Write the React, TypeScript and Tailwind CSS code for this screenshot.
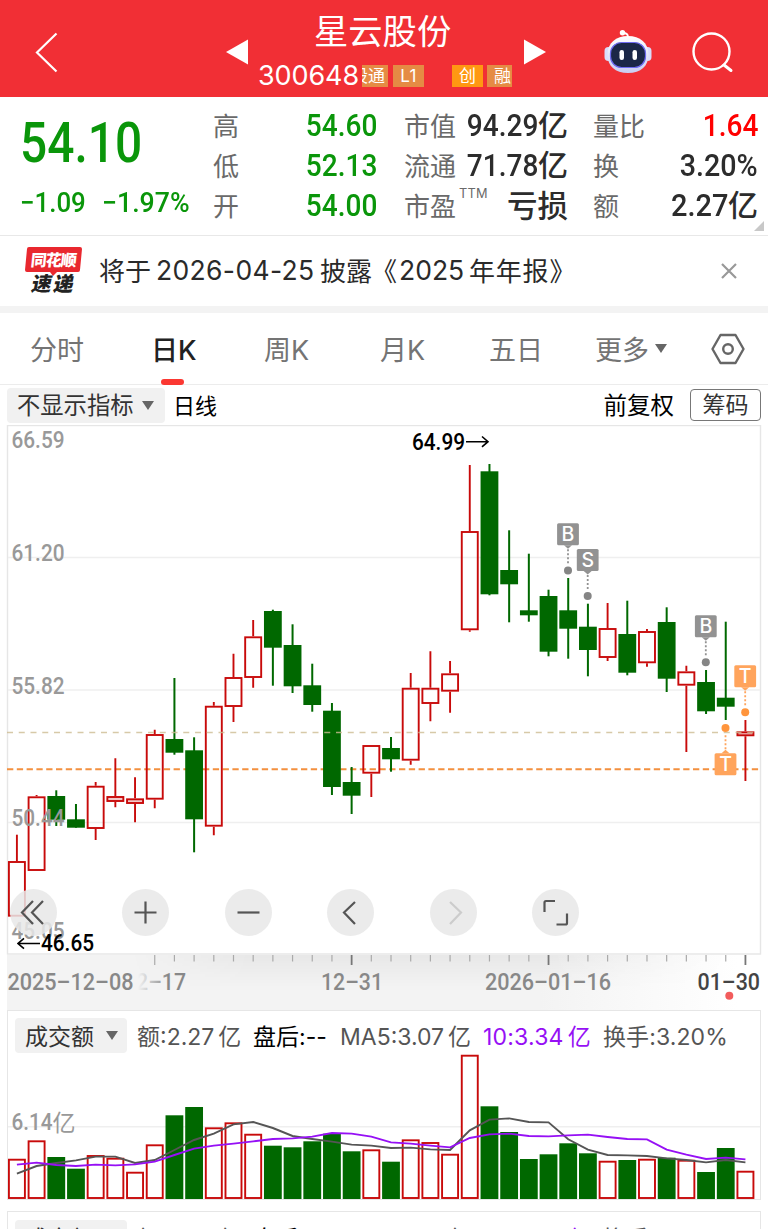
import React from 'react';

const NUM = "font-['Roboto','Noto_Sans_CJK_SC',sans-serif] font-medium";

// [high, body top, body bottom, low, rising]
const CANDLES: [number, number, number, number, number][] = [
  [834.7, 861, 916.7, 916.7, 1], [795, 796.3, 871, 871, 1], [790.3, 796, 819.7, 826, 0], [804, 819.3, 827.7, 827.7, 0],
  [782, 785.7, 829, 840, 1], [758.3, 796, 802, 807.3, 1], [777.3, 798.3, 804, 822.3, 1], [729.7, 734, 799.7, 808.3, 1],
  [678, 739, 752.7, 754.7, 0], [737.3, 750.3, 819.3, 852.3, 0], [702, 705.7, 826.7, 835.3, 1], [653.7, 677, 707, 722, 1],
  [620, 636.3, 678, 687.7, 1], [609.7, 611, 647.7, 685.7, 0], [624.3, 645, 686.3, 693, 0], [663.7, 685.3, 705, 711.7, 0],
  [703, 710.7, 787, 795, 0], [767, 782, 795.7, 814, 0], [745, 745, 773.7, 797, 1], [737, 748, 759.3, 771.7, 0],
  [673, 687.7, 760.7, 764.7, 1], [651.3, 687.7, 704, 721.3, 1], [661, 673.3, 691.7, 712.7, 1], [465, 531, 630.3, 631.7, 1],
  [464, 471.3, 594.3, 595.3, 0], [530.3, 570, 584.3, 622.3, 0], [553.7, 610.3, 615.3, 621.7, 0], [589.7, 596, 651.7, 656.3, 0],
  [578, 610.3, 628.7, 658.7, 0], [603.7, 626.7, 650, 676.3, 0], [603, 628, 658, 661, 1], [600.7, 634, 672.7, 675.3, 0],
  [629, 631, 663.3, 666.7, 1], [607.3, 622, 678.7, 692, 0], [665.7, 671.3, 685.7, 752, 1], [670, 682, 711.3, 714, 0],
  [621.7, 697.7, 706.7, 720, 0], [720, 731.3, 736.3, 781, 1],
];

const VOLUME_TOPS = [
  1158.7, 1140.3, 1157, 1168.7, 1155, 1157.7, 1171.7, 1144.3, 1115.3, 1107, 1127.3, 1122.3, 1133.7, 1145.7, 1147.3, 1141.3,
  1133.7, 1151.3, 1149.3, 1161.7, 1139.3, 1142, 1153.7, 1054.7, 1106.3, 1132, 1159, 1154.3, 1143.3, 1153.3, 1160.7, 1160,
  1158.7, 1157.7, 1159.7, 1172, 1148, 1170.7,
];

const MA5 = [
  521, 498, 489, 481, 470, 470, 489, 480, 450, 420, 401, 373, 366, 384, 408, 417, 425, 434, 437, 444, 443, 448, 450, 391, 359,
  355, 366, 367, 418, 449, 465, 466, 468, 475, 480, 487, 480, 487,
];
const MA10 = [
  494, 488, 495, 498, 494, 496, 493, 485, 465, 446, 437, 431, 424, 417, 415, 410, 399, 401, 410, 427, 431, 437, 442, 414, 403,
  401, 408, 409, 406, 404, 411, 417, 418, 449, 464, 477, 473, 478,
];

const RED = '#c80a0a';
const GREEN = '#006800';

const cx = (i: number) => 16.9 + 19.69 * i;
const toPoints = (values: number[]) => values.map((v, i) => `${cx(i)},${1000 + v / 3}`).join(' ');

const Num: React.FC<{ children: React.ReactNode; className?: string }> = ({ children, className = 'origin-right scale-x-[0.89]' }) => (
  <span className={`inline-block ${className}`}>{children}</span>
);

const Tag: React.FC<{ className: string; children: React.ReactNode }> = ({ className, children }) => (
  <span className={`flex h-[22px] items-center overflow-hidden whitespace-nowrap text-[17px] leading-none text-white ${className}`}>
    {children}
  </span>
);

const Header = () => (
  <header className="flex h-[97px] shrink-0 bg-[#f12f35] text-white">
    <div className="w-[226px] pl-[35px] pt-[32px]">
      <svg width="24" height="42" viewBox="0 0 24 42" fill="none" stroke="#fff" strokeWidth="2.2"><path d="M21.5 1.5 2 20.5l19.5 19" /></svg>
    </div>
    <svg className="mt-[39px]" width="22" height="26" fill="#fff"><path d="M0 13 22 .5v25z" /></svg>
    <div className="w-[276px] pt-[11px]">
      <h1 className="pl-[66px] text-[34.3px] font-normal leading-[42px]">星云股份</h1>
      <div className="flex items-center pl-[10px] pt-[12px]">
        <span className="w-[104px] text-[27px] leading-[22px] tracking-[-0.1px]">300648</span>
        <Tag className="w-[26px] justify-end bg-[#e58b44] pr-[3px]">股通</Tag>
        <Tag className="ml-[5px] w-[31px] justify-center bg-[#e58b44] tracking-wide">L1</Tag>
        <Tag className="ml-[28px] w-[31px] justify-center bg-[#ff9812]">创</Tag>
        <Tag className="ml-[4px] w-[25px] bg-[#e58b44] pl-[7px]">融</Tag>
      </div>
    </div>
    <svg className="mt-[39px]" width="22" height="26" fill="#fff"><path d="M22 13 0 .5v25z" /></svg>
    <svg className="ml-[57px] mt-[29px]" width="50" height="45" viewBox="0 0 50 45">
      <defs>
        <linearGradient id="shell" x1="0" y1="0" x2="0" y2="1"><stop offset="0" stopColor="#fff" /><stop offset="1" stopColor="#c9cdf2" /></linearGradient>
      </defs>
      <path d="M25 8c0-3-2-4-5-4" fill="none" stroke="#fff" strokeWidth="1.8" />
      <circle cx="19.500" cy="3.700" r="2.700" fill="#fff" />
      <rect x="1.500" y="18" width="8" height="14" rx="4" fill="#dadcfa" />
      <rect x="40.500" y="18" width="8" height="14" rx="4" fill="#dadcfa" />
      <path d="M25 7c12 0 20.500 7 20.500 18.500S38 44 25 44 4.500 37 4.500 25.500 13 7 25 7z" fill="url(#shell)" />
      <rect x="7.500" y="13.500" width="35" height="25" rx="11" fill="#1b2747" stroke="#6d6af0" strokeWidth="1.200" />
      <rect x="16.500" y="21" width="4.500" height="10" rx="2.200" fill="#fff" />
      <rect x="29.500" y="21" width="4.500" height="10" rx="2.200" fill="#fff" />
    </svg>
    <svg className="ml-[39px] mt-[32px]" width="42" height="42" fill="none" stroke="#fff" strokeWidth="2.400">
      <circle cx="19.500" cy="19.500" r="18" /><path d="m32 33 7 5.500" strokeLinecap="round" strokeWidth="3" />
    </svg>
  </header>
);

const label = 'text-[26px] font-normal text-[#6a6a6a] pt-px';

const Quote = () => (
  <section className="relative flex h-[139px] shrink-0 border-b border-[#e8e8e8] pt-[8.500px]">
    <div className={`w-[213px] pl-[20px] text-[#0a960a] ${NUM}`}>
      <div className="pt-[7px] text-[55px] leading-[60px]"><Num className="origin-left scale-x-[0.87]">54.10</Num></div>
      <div className="flex pt-[16px] text-[27.5px] leading-[28px]">
        <span className="w-[82px]"><Num className="origin-left scale-x-[0.94]">−1.09</Num></span>
        <Num className="origin-left scale-x-[0.97]">−1.97%</Num>
      </div>
    </div>
    <div className="w-[164px] text-[31.5px] leading-[40px]">
      {[['高', '54.60'], ['低', '52.13'], ['开', '54.00']].map(([name, value]) => (
        <div key={name} className="flex h-[40px] justify-between">
          <span className={label}>{name}</span>
          <span className={`text-[#0a960a] ${NUM}`}><Num>{value}</Num></span>
        </div>
      ))}
    </div>
    <div className="ml-[27px] w-[164px] text-[31.5px] leading-[40px] text-[#2c2c2c]">
      {[['市值', '94.29'], ['流通', '71.78']].map(([name, value]) => (
        <div key={name} className="flex h-[40px] justify-between">
          <span className={label}>{name}</span>
          <span className={`whitespace-nowrap -ml-3 ${NUM}`}><Num>{value}</Num><span className="text-[30px]">亿</span></span>
        </div>
      ))}
      <div className="flex h-[40px]">
        <span className={label}>市盈</span>
        <span className="ml-[3px] -mt-[12px] text-[12.800px] tracking-[0.2px] text-[#6a6a6a]">TTM</span>
        <span className="ml-auto text-[30.500px] font-medium">亏损</span>
      </div>
    </div>
    <div className="ml-[25px] w-[165px] text-[31.5px] leading-[40px] text-[#2c2c2c]">
      <div className="flex h-[40px] justify-between"><span className={label}>量比</span><span className={`text-[#ff0000] ${NUM}`}><Num>1.64</Num></span></div>
      <div className="flex h-[40px] justify-between"><span className={label}>换</span><span className={NUM}><Num className="origin-right scale-x-[0.91]">3.20%</Num></span></div>
      <div className="flex h-[40px] justify-between"><span className={label}>额</span><span className={NUM}><Num className="origin-right scale-x-[0.92]">2.27</Num><span className="text-[30px]">亿</span></span></div>
    </div>
    <svg className="absolute bottom-[4px] right-[4px]" width="10" height="10" fill="#c8c8c8"><path d="M10 0v10H0z" /></svg>
  </section>
);

const Notice = () => (
  <section className="flex h-[70px] shrink-0 items-center pl-[25px]">
    <div className="flex h-[48px] w-[57px] flex-col items-center">
      <div className="relative flex h-[25px] w-[57px] items-center justify-center">
        <svg className="absolute inset-0" width="57" height="29" fill="#e9282f"><path d="M4 0h51q2 0 2 2l-2 21q0 2-2 2H32l-4 4-3-4H2q-2 0-2-2L2 2q0-2 2-2z" /></svg>
        <span className="relative -skew-x-6 text-[16px] font-black leading-none tracking-[-1px] text-white">同花顺</span>
      </div>
      <span className="mt-[2px] -skew-x-12 text-[20px] font-black leading-[20px] tracking-[2px] text-[#222]">速递</span>
    </div>
    <p className="ml-[17px] flex w-[605px] items-center whitespace-nowrap text-[26px] text-[#2a2a2a]">
      <span className="w-[57px]">将于</span>
      <span className="w-[164px] text-[26.500px] tracking-[0.350px]">2026-04-25</span>
      <span className="w-[53px]">披露</span>
      <span className="w-[20px] -indent-[2px]">《</span>
      <span className="ml-[6px] w-[70px] text-[26.500px]">2025</span>
      <span className="tracking-[0.800px]">年年报》</span>
    </p>
    <svg className="ml-[17px]" width="16" height="16" stroke="#999" strokeWidth="2.200"><path d="m1 1 14 14M15 1 1 15" /></svg>
  </section>
);

const Tabs = () => (
  <nav className="flex h-[72px] shrink-0 items-center border-b border-[#ececec] text-[27px] text-[#747474]">
    <span className="w-[151px] pl-[30px] pt-[5px]">分时</span>
    <span className="relative flex h-full w-[113px] items-center pt-[5px] font-medium text-[#222]">
      日K
      <i className="absolute bottom-[-1px] left-[10px] h-[6px] w-[23px] rounded-[3px] bg-[#fb3832]" />
    </span>
    <span className="w-[116px] pt-[5px]">周K</span>
    <span className="w-[109px] pt-[5px]">月K</span>
    <span className="w-[106px] pt-[5px]">五日</span>
    <span className="flex w-[116px] items-center pt-[5px]">
      更多
      <svg className="-mt-[5px] ml-[6px]" width="12" height="9" fill="#666"><path d="M0 0h12L6 9z" /></svg>
    </span>
    <svg width="34" height="32" viewBox="0 0 34 32" fill="none" stroke="#666" strokeWidth="2.400" strokeLinejoin="round">
      <path d="M9.500 2h15L32.500 16l-8 14h-15L1.500 16z" /><circle cx="17" cy="16" r="4.800" />
    </svg>
  </nav>
);

const Toolbar = () => (
  <div className="flex h-[40px] shrink-0 items-center pl-[7px] pr-[7px] text-[23px]">
    <button className="flex h-[35px] w-[158px] items-center rounded-[4px] bg-[#f1f1f1] pl-[10px] text-[#333]">
      <span className="pt-[2px] text-[23.300px]">不显示指标</span>
      <svg className="ml-[9px]" width="12" height="9" fill="#666"><path d="M0 0h12L6 9z" /></svg>
    </button>
    <span className="ml-[8px] pt-[2px] text-[22px] text-black">日线</span>
    <span className="ml-auto pt-[2px] text-[23.500px] text-black">前复权</span>
    <button className="ml-[16px] flex h-[32px] w-[71px] items-center justify-center rounded-[4px] border border-[#777] pt-px text-[23px] text-[#333]">筹码</button>
  </div>
);

const Marker: React.FC<{ x: number; y: number; dot: number; text: string; gray?: boolean }> = ({ x, y, dot, text, gray }) => {
  const above = y < dot;
  const fill = gray ? '#929292' : '#ffa45c';
  const edge = above ? y + 22 : y;
  const dir = above ? 1 : -1;
  return (
    <g fill={fill}>
      <path d={`M${x} ${edge + dir * 4}V${dot - dir * 7}`} stroke={fill} strokeWidth="1.8" strokeDasharray="2 2" />
      <rect x={x - 10.9} y={y} width="21.800" height="22" rx="1.500" />
      <path d={`M${x - 4} ${edge}h8l-4 ${dir * 3.5}z`} />
      <circle cx={x} cy={dot} r="4" fill={gray ? '#858585' : '#ff953c'} />
      <text x={x} y={y + 18} fill="#fff" fontSize="19.500" fontWeight="500" textAnchor="middle" fontFamily="Inter">{text}</text>
    </g>
  );
};

const AxisLabel: React.FC<{ x: number; y: number; w: number; fill?: string; children: React.ReactNode }> = ({ x, y, w, fill = '#999', children }) => (
  <text x={x} y={y} textLength={w} lengthAdjust="spacingAndGlyphs" fill={fill} fontSize="23" fontWeight="500" fontFamily="Roboto">{children}</text>
);

const KLineChart = () => (
  <svg className="block" width="768" height="585" viewBox="0 425 768 585">
    <defs>
      <linearGradient id="band" x1="0" x2="1" y1="0" y2="0"><stop offset="0.700" stopColor="#f3f3f3" /><stop offset="0.960" stopColor="#fff" /></linearGradient>
      <linearGradient id="shade" x1="0" x2="0" y1="0" y2="1"><stop offset="0" stopColor="#000" stopOpacity="0.045" /><stop offset="1" stopColor="#000" stopOpacity="0" /></linearGradient>
      <linearGradient id="ends" x1="0" x2="1" y1="0" y2="0"><stop offset="0" stopColor="#000" /><stop offset="0.2" stopColor="#fff" /><stop offset="0.700" stopColor="#fff" /><stop offset="1" stopColor="#000" /></linearGradient>
      <mask id="shadeMask"><rect x="130" y="955" width="600" height="40" fill="url(#ends)" /></mask>
      <linearGradient id="fade" gradientUnits="userSpaceOnUse" x1="138" x2="168" y1="0" y2="0"><stop offset="0" stopColor="#888" stopOpacity="0" /><stop offset="1" stopColor="#888" /></linearGradient>
    </defs>
    <rect x="7" y="955" width="761" height="55" fill="url(#band)" />
    <rect x="130" y="955" width="600" height="32" fill="url(#shade)" mask="url(#shadeMask)" />
    <rect x="7.500" y="425.500" width="753" height="528.500" fill="#fff" stroke="#e6e6e6" strokeWidth="1.400" />
    <path d="M8 557.500h752M8 690h752M8 822.500h752" stroke="#efefef" strokeWidth="1.400" />
    <path d="M7 769.300h754" stroke="#f3903f" strokeWidth="2" strokeDasharray="6.300 3.500" />
    {CANDLES.map(([high, top, bottom, low, up], i) =>
      up ? (
        <g key={i} fill="none" stroke={RED} strokeWidth="1.900">
          <path d={`M${cx(i)} ${high}V${top}M${cx(i)} ${bottom}V${low}`} />
          <rect x={cx(i) - 8} y={top + 1} width="16" height={bottom - top - 2} fill={bottom - top < 7 ? '#f3c9c9' : 'none'} />
        </g>
      ) : (
        <g key={i} fill={GREEN}>
          <rect x={cx(i) - 1} y={high} width="2" height={low - high} />
          <rect x={cx(i) - 8.9} y={top} width="17.800" height={bottom - top} />
        </g>
      ),
    )}
    <path d="M7 732.500h750" stroke="#cdbb92" strokeOpacity="0.800" strokeWidth="1.400" strokeDasharray="6 5.750" />

    <AxisLabel x={11.500} y={448} w={53}>66.59</AxisLabel>
    <AxisLabel x={11.500} y={561} w={53}>61.20</AxisLabel>
    <AxisLabel x={11.500} y={693.500} w={53}>55.82</AxisLabel>
    <AxisLabel x={11.500} y={825.500} w={53}>50.44</AxisLabel>
    <AxisLabel x={11.500} y={939} w={53}>45.05</AxisLabel>

    <AxisLabel x={412} y={450} w={53} fill="#000">64.99</AxisLabel>
    <path d="M466 441.700h22M482 436.500l6 5.200-6 5.200" fill="none" stroke="#000" strokeWidth="1.600" />

    <Marker x={568} y={523.3} dot={570.6} text="B" gray />
    <Marker x={587.7} y={549} dot={596} text="S" gray />
    <Marker x={705.8} y={615.3} dot={662.3} text="B" gray />
    <Marker x={745.2} y={665.3} dot={712.3} text="T" />
    <Marker x={725.5} y={753.3} dot={728} text="T" />

    {CANDLES.map((_, i) => i >= 7 && (
      <path key={i} d={`M${cx(i)} 955v${i % 10 === 7 ? 10 : 6.5}`} stroke={i % 10 === 7 && i > 7 ? '#777' : '#aaa'} strokeWidth={i % 10 === 7 && i > 7 ? 1.8 : 1.2} />
    ))}
    <AxisLabel x={124} y={990} w={62} fill="url(#fade)">12–17</AxisLabel>
    <AxisLabel x={7.500} y={990} w={126} fill="#888">2025–12–08</AxisLabel>
    <AxisLabel x={321} y={990} w={62} fill="#888">12–31</AxisLabel>
    <AxisLabel x={485} y={990} w={126} fill="#888">2026–01–16</AxisLabel>
    <AxisLabel x={697.500} y={990} w={62.500} fill="#444">01–30</AxisLabel>
    <circle cx="729.300" cy="995.700" r="4" fill="#f25c5c" />
  </svg>
);

const CONTROLS = [
  { d: 'M23 12 12 23.500 23 35M33 12 22 23.500 33 35', color: '#555' },
  { d: 'M23.500 12.500v22M12.500 23.500h22', color: '#555' },
  { d: 'M12.500 23.500h22', color: '#555' },
  { d: 'M28 13 17 23.500 28 35', color: '#555' },
  { d: 'M20 13 31 23.500 20 35', color: '#ccc' },
  { d: 'M12.500 23V13.500q0-1.500 1.500-1.500h9M35 24.500V34q0 1.500-1.500 1.500h-9', color: '#555' },
];

const ChartControls = () => (
  <div className="absolute left-[10px] top-[463.700px] flex gap-[55.400px]">
    {CONTROLS.map(({ d, color }, i) => (
      <button key={i} className="h-[47px] w-[47px] rounded-full bg-[#e8e8e8]/85 first:mr-[10px]">
        <svg width="47" height="47" viewBox="0 0 47 47" fill="none" stroke={color} strokeWidth="2.200"><path d={d} /></svg>
      </button>
    ))}
  </div>
);

const PanelHeader: React.FC = () => (
  <div className="flex h-[35px] items-center whitespace-nowrap pl-[7px] text-[23px] text-[#555]">
    <button className="mr-[10px] flex h-[35px] w-[112px] shrink-0 items-center rounded-[4px] bg-[#f1f1f1] pl-[10px] text-[#333]">
      <span className="pt-[3px]">成交额</span>
      <svg className="ml-[12px]" width="12" height="9" fill="#666"><path d="M0 0h12L6 9z" /></svg>
    </button>
    <span className="w-[116px] pt-[4px]">额:2.27<span className="ml-[4px]">亿</span></span>
    <span className="w-[87px] pt-[4px] text-black">盘后:--</span>
    <span className="w-[143px] pt-[4px]">MA5:3.07<span className="ml-[4px]">亿</span></span>
    <span className="w-[120px] pt-[4px] tracking-[0.2px] text-[#9610f5]">10:3.34<span className="ml-[4px]">亿</span></span>
    <span className="pt-[4px] tracking-[0.1px]">换手:3.20%</span>
  </div>
);

const VolumePanel = () => (
  <section className="relative ml-[7px] h-[190px] w-[754px] shrink-0 border border-[#e6e6e6] pt-[7px]">
    <PanelHeader />
    <svg className="absolute left-0 top-0" width="752" height="188" viewBox="8 1011 752 188">
      <path d="M8 1126.700h752" stroke="#efefef" strokeWidth="1.400" />
      {VOLUME_TOPS.map((top, i) =>
        CANDLES[i][4] ? (
          <rect key={i} x={cx(i) - 8} y={top + 1} width="16" height={1197 - top} fill="#fff" stroke={RED} strokeWidth="1.900" />
        ) : (
          <rect key={i} x={cx(i) - 8.9} y={top} width="17.800" height={1199 - top} fill={GREEN} />
        ),
      )}
      <polyline points={toPoints(MA5)} fill="none" stroke="#555" strokeWidth="1.900" />
      <polyline points={toPoints(MA10)} fill="none" stroke="#9610f5" strokeWidth="1.900" />
      <text x="11.500" y="1130" textLength="41" lengthAdjust="spacingAndGlyphs" fill="#999" fontSize="23" fontWeight="500" fontFamily="Roboto">6.14</text>
      <text x="52.500" y="1130.500" fill="#999" fontSize="23" fontFamily="Noto Sans CJK SC">亿</text>
    </svg>
  </section>
);

export default function App() {
  return (
    <main className="flex h-[1229px] w-[768px] flex-col overflow-hidden bg-white font-['Inter','Noto_Sans_CJK_SC',sans-serif]">
      <Header />
      <Quote />
      <Notice />
      <div className="h-[7px] shrink-0 bg-[#f3f3f3]" />
      <Tabs />
      <Toolbar />
      <div className="relative h-[585px] shrink-0">
        <KLineChart />
        <ChartControls />
        <svg className="absolute left-[17px] top-[506px]" width="94" height="28" viewBox="0 -2 94 28">
          <path d="M1 10.500h22M7 5.300l-6 5.200 6 5.200" fill="none" stroke="#000" strokeWidth="1.600" />
          <AxisLabel x={24} y={18} w={53} fill="#000">46.65</AxisLabel>
        </svg>
      </div>
      <VolumePanel />
      <section className="ml-[7px] mt-[11px] h-[60px] w-[754px] shrink-0 border border-[#e6e6e6] pt-[8px]"><PanelHeader /></section>
    </main>
  );
}
